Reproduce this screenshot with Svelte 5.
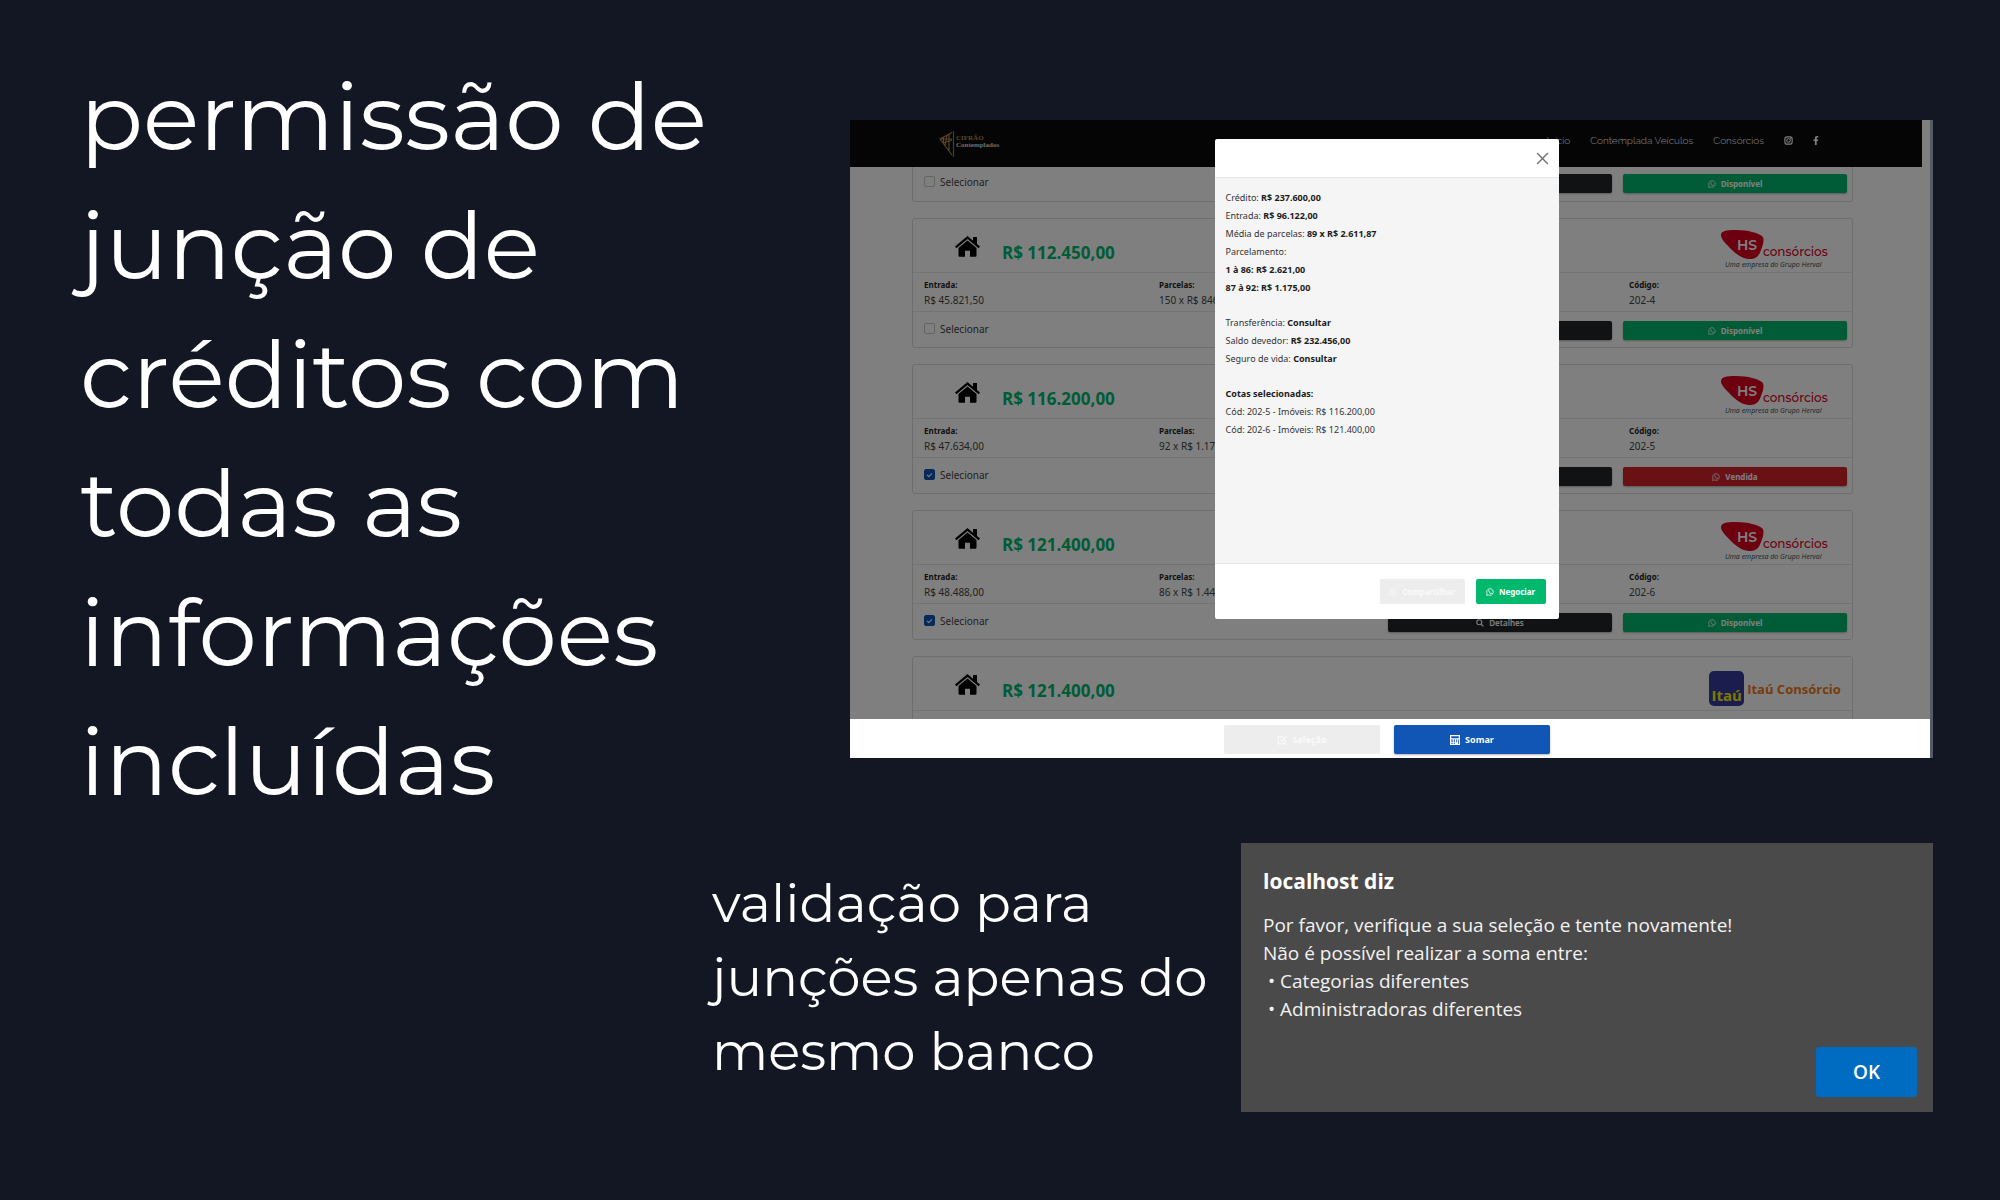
<script>
  const quotas = [
    { price: 'R$ 112.450,00', entry: 'R$ 45.821,50', parts: '150 x R$ 846,00', code: '202-4', brand: 'hs', checked: false, sold: false },
    { price: 'R$ 116.200,00', entry: 'R$ 47.634,00', parts: '92 x R$ 1.175,00', code: '202-5', brand: 'hs', checked: true, sold: true },
    { price: 'R$ 121.400,00', entry: 'R$ 48.488,00', parts: '86 x R$ 1.446,00', code: '202-6', brand: 'hs', checked: true, sold: false },
    { price: 'R$ 121.400,00', brand: 'itau' }
  ];
</script>

{#snippet whats()}
  <svg class="ico" viewBox="0 0 16 16" aria-hidden="true">
    <path d="M1.2 14.8l1-3.5a6.6 6.6 0 1 1 2.5 2.5z" fill="none" stroke="currentColor" stroke-width="1.6" />
    <path d="M5.6 4.2c-1.3.9-.9 2.6.5 4.7s3.4 3.1 4.7 2.7c1-.4 1.2-1.3.9-1.7l-1.7-.8-.9 1c-1.2-.5-2-1.3-2.5-2.4l.7-.9-.8-2z" fill="currentColor" />
  </svg>
{/snippet}

{#snippet foot(id, checked, sold)}
  <div class="foot cols">
    <label class="pick" for={id}><input type="checkbox" {id} {checked} />Selecionar</label>
    <span></span>
    <button class="btn dark">
      <svg class="ico" viewBox="0 0 16 16" aria-hidden="true">
        <circle cx="6.5" cy="6.5" r="5" fill="none" stroke="currentColor" stroke-width="2.2" />
        <path d="M10.2 10.2l4.6 4.6" stroke="currentColor" stroke-width="2.6" />
      </svg>Detalhes
    </button>
    <button class="btn" class:red={sold}>{@render whats()}{sold ? 'Vendida' : 'Disponível'}</button>
  </div>
{/snippet}

<main>
  <section class="top">
    <h1>
      <span>permissão de</span>
      <span>junção de</span>
      <span>créditos com</span>
      <span>todas as</span>
      <span>informações</span>
      <span>incluídas</span>
    </h1>

    <div class="shot">
      <header class="nav">
        <a class="logo" href="#inicio" aria-label="Cifrão Contemplados">
          <svg viewBox="0 0 16 28" aria-hidden="true">
            <path d="M13 2.5L1 9l12 16M1 9h12M4.5 7v6M8 5L6 15.5M10 4v17M4 13l9-3" fill="none" stroke="#b08a50" stroke-width="1.2" />
            <path d="M14.5 1v26" stroke="#8a7a5c" stroke-width="1.2" />
          </svg>
          <span class="brand"><b>CIFRÃO</b><i>Contemplados</i></span>
        </a>
        <nav>
          <a href="#inicio">Início</a>
          <a href="#veiculos">Contemplada Veículos</a>
          <a href="#consorcios">Consórcios</a>
          <a href="#instagram" aria-label="Instagram">
            <svg class="ig" viewBox="0 0 16 16" aria-hidden="true">
              <rect x="1.5" y="1.5" width="13" height="13" rx="4" fill="none" stroke="currentColor" stroke-width="2" />
              <circle cx="8" cy="8" r="3.2" fill="none" stroke="currentColor" stroke-width="1.8" />
              <circle cx="11.8" cy="4.2" r="1" fill="currentColor" />
            </svg>
          </a>
          <a href="#facebook" aria-label="Facebook">
            <svg class="fb" viewBox="0 0 10 16" aria-hidden="true">
              <path d="M3 16V9H.5V6H3V4c0-2.600 1.400-4 3.800-4L9 .2v2.600H7.600C6.500 2.800 6.200 3.300 6.200 4.200V6H9l-.5 3H6.200v7z" fill="currentColor" />
            </svg>
          </a>
        </nav>
      </header>

      <div class="feed">
        <article class="card cut">{@render foot('sel-top', false, false)}</article>
        {#each quotas as c, i}
          <article class="card">
            <div class="head cols">
              <div class="sum">
                <svg class="house" viewBox="0 0 25 21" aria-hidden="true">
                  <path d="M12.5 0L18 4.700V1h4v7l3 2.600-1.400 1.700L12.500 2.900 1.400 12.300 0 10.600z" />
                  <path d="M12.500 4.600L21.500 12v7.500q0 1.200-1.200 1.200H15v-6h-5v6H4.700q-1.200 0-1.200-1.200V12z" />
                </svg>
                <strong>{c.price}</strong>
              </div>
              <div class="mark">
                {#if c.brand === 'hs'}
                  <svg class="hs" viewBox="0 0 110 42" role="img" aria-label="HS Consórcios">
                    <path d="M1 5C1 1 6 0 16 0 28 0 38 3 42 6c3 3 1 9-1 14-2 6-5 9-11 9-7 0-13-4-19-10C5 13 1 9 1 5z" fill="#d8001f" />
                    <text x="17" y="20" class="hs-a">HS</text>
                    <text x="43" y="26" class="hs-b">consórcios</text>
                    <text x="5" y="37" class="hs-c">Uma empresa do Grupo Herval</text>
                  </svg>
                {:else}
                  <div class="itau"><span>Itaú</span><b>Itaú Consórcio</b></div>
                {/if}
              </div>
            </div>
            {#if c.code}
              <dl class="mid cols">
                <div><dt>Entrada:</dt><dd>{c.entry}</dd></div>
                <div><dt>Parcelas:</dt><dd>{c.parts}</dd></div>
                <div></div>
                <div><dt>Código:</dt><dd>{c.code}</dd></div>
              </dl>
              {@render foot('sel-' + i, c.checked, c.sold)}
            {/if}
          </article>
        {/each}
      </div>

      <div class="veil">
        <section class="modal" role="dialog" aria-label="Soma das cotas">
          <div class="m-head">
            <button class="close" aria-label="Fechar">
              <svg viewBox="0 0 12 12" aria-hidden="true"><path d="M1 1l10 10M11 1L1 11" stroke="#777" stroke-width="1.4" /></svg>
            </button>
          </div>
          <div class="m-body">
            <div>
              <p>Crédito: <b>R$ 237.600,00</b></p>
              <p>Entrada: <b>R$ 96.122,00</b></p>
              <p>Média de parcelas: <b>89 x R$ 2.611,87</b></p>
              <p>Parcelamento:</p>
              <p><b>1 à 86: R$ 2.621,00</b></p>
              <p><b>87 à 92: R$ 1.175,00</b></p>
            </div>
            <div>
              <p>Transferência: <b>Consultar</b></p>
              <p>Saldo devedor: <b>R$ 232.456,00</b></p>
              <p>Seguro de vida: <b>Consultar</b></p>
            </div>
            <div>
              <p><b>Cotas selecionadas:</b></p>
              <p>Cód: 202-5 - Imóveis: R$ 116.200,00</p>
              <p>Cód: 202-6 - Imóveis: R$ 121.400,00</p>
            </div>
          </div>
          <div class="m-foot">
            <button class="btn light">{@render whats()}Compartilhar</button>
            <button class="btn">{@render whats()}Negociar</button>
          </div>
        </section>
      </div>

      <footer class="bar">
        <button class="btn light">
          <svg class="ico" viewBox="0 0 16 16" aria-hidden="true">
            <path d="M13 8v6H2V3h8M5 7l3 3 7-8" fill="none" stroke="currentColor" stroke-width="2" />
          </svg>Seleção
        </button>
        <button class="btn blue">
          <svg class="ico" viewBox="0 0 16 16" aria-hidden="true">
            <path d="M0 0h16v16H0z" fill="currentColor" />
            <path d="M2 2h12v3H2zM2 7h2.500v2H2zM6 7h2v2H6zM9.500 7h2v2h-2zM2 10h2.500v1.500H2zM6 10h2v1.500H6zM9.500 10h2v1.500h-2zM2 13h2.500v1.500H2zM6 13h2v1.500H6zM12.800 7H14v7.500h-1.200z" fill="#1155b5" />
          </svg>Somar
        </button>
      </footer>
    </div>
  </section>

  <section class="low">
    <h2>
      <span>validação para</span>
      <span>junções apenas do</span>
      <span>mesmo banco</span>
    </h2>
    <div class="alert" role="alertdialog" aria-labelledby="alert-title">
      <h3 id="alert-title">localhost diz</h3>
      <p>Por favor, verifique a sua seleção e tente novamente!</p>
      <p>Não é possível realizar a soma entre:</p>
      <ul>
        <li>• Categorias diferentes</li>
        <li>• Administradoras diferentes</li>
      </ul>
      <button class="ok">OK</button>
    </div>
  </section>
</main>

<style>
  :global(body) {
    margin: 0;
    background: #131724;
  }
  main {
    min-height: 100vh;
    box-sizing: border-box;
    padding: 52px 67px 88px 0;
    display: flex;
    flex-direction: column;
    gap: 17px;
    background: #131724;
    font-family: 'Open Sans', 'Noto Sans', sans-serif;
    color: #222;
  }
  h1, h2, h3, p, ul, dl, dd {
    margin: 0;
    padding: 0;
  }
  button {
    font-family: inherit;
    border: 0;
    cursor: pointer;
  }
  h1, h2 {
    color: #fff;
    font-family: Montserrat, Inter, sans-serif;
    font-weight: 400;
  }
  h1 span, h2 span {
    display: block;
    white-space: nowrap;
  }
  .top {
    display: grid;
    grid-template-columns: minmax(0, 850fr) minmax(0, 1083fr);
    align-items: start;
  }
  h1 {
    padding-left: 80px;
    font-size: 93px;
    line-height: 129px;
  }
  .shot {
    position: relative;
    margin-top: 68px;
    aspect-ratio: 1083 / 638;
    overflow: hidden;
    background: #fff;
    font-family: 'Noto Sans', 'Open Sans', sans-serif;
  }
  .nav {
    height: 47px;
    box-sizing: border-box;
    margin-right: 11px;
    padding: 0 103px 0 89px;
    display: flex;
    justify-content: space-between;
    align-items: center;
    background: #0a0a0a;
  }
  .logo {
    display: flex;
    align-items: flex-start;
    gap: 1px;
    text-decoration: none;
  }
  .logo svg {
    width: 16px;
    height: 28px;
  }
  .brand {
    padding-top: 5px;
    font-family: 'Liberation Serif', serif;
    font-size: 7px;
    line-height: 7px;
    font-weight: 700;
  }
  .brand b, .brand i {
    display: block;
    font-style: normal;
  }
  .brand b {
    color: #b88a40;
  }
  .brand i {
    color: #ddd;
  }
  nav {
    display: flex;
    align-items: center;
    gap: 20px;
    padding-bottom: 6px;
  }
  nav a {
    display: flex;
    color: #fff;
    text-decoration: none;
    font-family: Raleway, Lato, sans-serif;
    font-size: 10px;
    font-weight: 300;
    line-height: 14px;
  }
  .ig {
    width: 9px;
    height: 9px;
  }
  .fb {
    width: 6px;
    height: 9px;
  }
  .feed {
    display: flex;
    flex-direction: column;
    gap: 16px;
    padding: 0 80px 0 62px;
  }
  .card {
    box-sizing: border-box;
    height: 130px;
    border: 1px solid #dcdcdc;
    border-radius: 3px;
  }
  .card.cut {
    height: 35px;
    border-top: 0;
    border-radius: 0 0 3px 3px;
  }
  .cols {
    display: grid;
    grid-template-columns: repeat(4, minmax(0, 1fr));
    column-gap: 11px;
    padding: 0 5px;
    box-sizing: border-box;
  }
  .head {
    height: 54px;
    border-bottom: 1px solid #e6e6e6;
  }
  .sum {
    grid-column: span 3;
    display: flex;
    align-items: flex-end;
    gap: 22px;
    padding: 0 0 8px 37px;
  }
  .house {
    width: 25px;
    height: 21px;
    margin-bottom: 7px;
  }
  .sum strong {
    font-family: 'Open Sans', sans-serif;
    font-size: 17px;
    line-height: 22px;
    color: #00b96e;
  }
  .mark {
    justify-self: end;
    width: 144px;
    display: flex;
    justify-content: center;
    align-items: flex-start;
    padding-top: 11px;
  }
  .hs {
    width: 110px;
    height: 42px;
    overflow: visible;
  }
  .hs-a {
    font: 600 14px Montserrat, sans-serif;
    fill: #fff;
  }
  .hs-b {
    font: 500 12px Montserrat, sans-serif;
    fill: #d8001f;
  }
  .hs-c {
    font: italic 7px 'Open Sans', sans-serif;
    fill: #2f4650;
  }
  .itau {
    display: flex;
    align-items: center;
    gap: 3px;
    padding-top: 3px;
    color: #f07818;
    font-family: 'Open Sans', sans-serif;
    font-size: 13px;
    line-height: 18px;
  }
  .itau span {
    width: 35px;
    height: 35px;
    box-sizing: border-box;
    padding-top: 15px;
    border-radius: 5px;
    background: #363a9c;
    color: #fff200;
    font-size: 15px;
    font-weight: 700;
    text-align: center;
  }
  .itau b {
    white-space: nowrap;
  }
  .mid {
    height: 39px;
    padding-top: 5px;
    border-bottom: 1px solid #e6e6e6;
  }
  .mid div {
    padding-left: 6px;
  }
  .mid dt {
    font-size: 8px;
    line-height: 14px;
    font-weight: 700;
  }
  .mid dd {
    font-size: 10px;
    line-height: 17px;
    color: #444;
    white-space: nowrap;
  }
  .foot {
    height: 35px;
    padding-bottom: 7px;
    align-items: end;
  }
  .cut .foot {
    height: 33px;
  }
  .pick {
    display: flex;
    align-items: center;
    gap: 5px;
    height: 23px;
    padding-left: 6px;
    font-size: 10px;
    color: #444;
  }
  .pick input {
    appearance: none;
    width: 11px;
    height: 11px;
    box-sizing: border-box;
    margin: 0;
    border: 1px solid #c8c8c8;
    border-radius: 2px;
    display: grid;
    place-items: center;
  }
  .pick input:checked {
    background: #1155b5;
    border-color: #1155b5;
  }
  .pick input:checked::after {
    content: '';
    width: 4px;
    height: 2px;
    border: solid #fff;
    border-width: 0 0 1px 1px;
    rotate: -45deg;
  }
  .btn {
    display: flex;
    align-items: center;
    justify-content: center;
    gap: 5px;
    height: 19px;
    padding: 0;
    border-radius: 2px;
    background: #00b96c;
    color: #fff;
    font-size: 8px;
    line-height: 12px;
    font-weight: 700;
    box-shadow: 0 1px 2px rgba(0, 0, 0, 0.3);
  }
  .btn.dark {
    background: #212529;
    font-weight: 600;
  }
  .btn.red {
    background: #d2222a;
  }
  .btn.light {
    background: #ededed;
    color: #fafafa;
    box-shadow: none;
  }
  .btn.blue {
    background: #1155b5;
  }
  .ico {
    width: 8px;
    height: 8px;
  }
  .veil {
    position: absolute;
    inset: 0;
    display: flex;
    justify-content: center;
    align-items: flex-start;
    padding: 19px 7px 0 0;
    background: rgba(0, 0, 0, 0.5);
    border-right: 3px solid #555b64;
    box-sizing: border-box;
  }
  .modal {
    width: 344px;
    border-radius: 2px;
    overflow: hidden;
    background: #fff;
  }
  .m-head {
    display: flex;
    justify-content: flex-end;
    padding: 13px 10px 12px;
    border-bottom: 1px solid #e6e6e6;
  }
  .close {
    display: flex;
    padding: 0;
    background: none;
  }
  .close svg {
    width: 13px;
    height: 13px;
  }
  .m-body {
    display: flex;
    flex-direction: column;
    gap: 17px;
    min-height: 385px;
    box-sizing: border-box;
    padding: 11px;
    background: #f5f5f5;
    color: #333;
    font-size: 9px;
    line-height: 18px;
  }
  .m-body b {
    color: #1c1c1c;
  }
  .m-foot {
    display: flex;
    justify-content: flex-end;
    gap: 11px;
    padding: 15px 13px;
    border-top: 1px solid #e6e6e6;
  }
  .m-foot .btn {
    width: 70px;
    height: 25px;
    box-shadow: none;
  }
  .m-foot .light {
    width: 85px;
  }
  .bar {
    position: absolute;
    inset: auto 3px 0 0;
    display: flex;
    justify-content: center;
    gap: 14px;
    height: 39px;
    box-sizing: border-box;
    padding: 6px 6px 4px 0;
    background: #fff;
  }
  .bar .btn {
    width: 156px;
    height: 29px;
    font-size: 9px;
  }
  .bar .ico {
    width: 10px;
    height: 10px;
  }
  .low {
    display: grid;
    grid-template-columns: minmax(0, 712fr) minmax(0, 529fr) minmax(0, 692fr);
    align-items: start;
  }
  h2 {
    grid-column: 2;
    padding-top: 23px;
    font-size: 53px;
    line-height: 74px;
  }
  .alert {
    display: flex;
    flex-direction: column;
    box-sizing: border-box;
    min-height: 269px;
    padding: 24px 16px 15px 22px;
    background: #4a4a4a;
    color: #f2f2f2;
    font-size: 19px;
    line-height: 28px;
  }
  h3 {
    margin-bottom: 16px;
    color: #fff;
    font-size: 21px;
    line-height: 28px;
  }
  ul {
    list-style: none;
    padding-left: 5px;
  }
  .ok {
    align-self: flex-end;
    width: 101px;
    height: 50px;
    margin-top: auto;
    border-radius: 4px;
    background: #006cc1;
    color: #fff;
    font-size: 19px;
    font-weight: 600;
  }
</style>
